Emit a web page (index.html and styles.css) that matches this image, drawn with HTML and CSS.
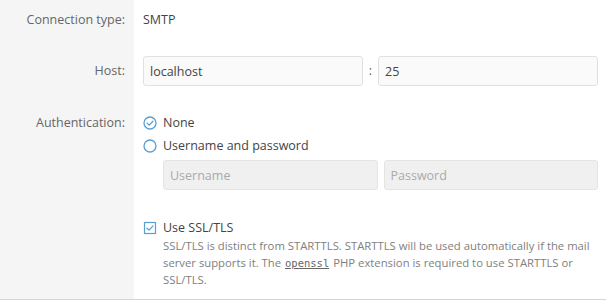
FILE: index.html
```html
<!DOCTYPE html>
<html lang="en">
  <head>
    <meta charset="UTF-8" />
    <title>Mail settings</title>
    <link rel="stylesheet" href="styles.css">
  </head>
  <body>
    <form class="settings">
      <!-- Connection type -->
      <div class="row row-type">
        <div class="label">Connection type:</div>
        <div class="value">SMTP</div>
      </div>

      <!-- Host and port -->
      <div class="row row-host">
        <div class="label">Host:</div>
        <div class="value host-fields">
          <input class="field" type="text" value="localhost" />
          <span class="colon">:</span>
          <input class="field" type="text" value="25" />
        </div>
      </div>

      <!-- Authentication -->
      <div class="row row-auth">
        <div class="label">Authentication:</div>
        <div class="value">
          <label class="option">
            <svg class="icon" viewBox="0 0 14 14" width="14" height="14">
              <circle cx="7" cy="7" r="6" fill="none" stroke="#5a9fd4" stroke-width="1.3" />
              <path d="M4.2 7.2 L6.2 9.1 L9.9 5.2" fill="none" stroke="#5a9fd4" stroke-width="1.3" stroke-linecap="round" stroke-linejoin="round" />
            </svg>
            None
          </label>
          <label class="option">
            <svg class="icon" viewBox="0 0 14 14" width="14" height="14">
              <circle cx="7" cy="7" r="6" fill="none" stroke="#5a9fd4" stroke-width="1.3" />
            </svg>
            Username and password
          </label>
          <div class="credentials">
            <input class="field" type="text" placeholder="Username" disabled />
            <input class="field" type="password" placeholder="Password" disabled />
          </div>

          <label class="option ssl">
            <svg class="icon" viewBox="0 0 14 14" width="14" height="14">
              <rect x="1.5" y="1.5" width="11" height="11" fill="none" stroke="#5a9fd4" stroke-width="1.2" />
              <path d="M4 7.2 L6 9.1 L10 4.9" fill="none" stroke="#5a9fd4" stroke-width="1.3" stroke-linecap="round" stroke-linejoin="round" />
            </svg>
            Use SSL/TLS
          </label>
          <p class="help">
            SSL/TLS is distinct from STARTTLS. STARTTLS will be used automatically if the mail
            server supports it. The <code>openssl</code> PHP extension is required to use STARTTLS or
            SSL/TLS.
          </p>
        </div>
      </div>
    </form>
  </body>
</html>
```

FILE: styles.css
```css
/* General Styles */
body {
  margin: 0;
  padding: 0;
  font-family: "Open Sans", sans-serif;
  font-size: 12.5px;
  color: #444;
  background-color: #fff;
}

.settings {
  border-bottom: 1px solid #d4d4d4;
}

.row {
  display: grid;
  grid-template-columns: 134px 1fr;
}

.label {
  background-color: #f5f5f5;
  color: #666;
  text-align: right;
  padding-right: 9px;
  line-height: 18px;
}

.value {
  padding: 0 8px 0 9px;
  line-height: 18px;
}

/* Rows */
.row-type .label,
.row-type .value {
  padding-top: 11px;
  padding-bottom: 11px;
}

.row-host .label {
  padding-top: 22px;
  padding-bottom: 20px;
}

.row-host .value {
  padding-top: 16px;
  padding-bottom: 14px;
}

.row-auth .label {
  padding-top: 14px;
}

.row-auth .value {
  padding-top: 14px;
  padding-bottom: 11px;
}

/* Inputs */
.field {
  box-sizing: border-box;
  height: 30px;
  min-width: 0;
  flex: 1;
  border: 1px solid #e0e0e0;
  border-radius: 3px;
  background-color: #fafafa;
  padding: 0 6px;
  font-family: "Open Sans", sans-serif;
  font-size: 12.5px;
  color: #444;
}

.field:disabled {
  background-color: #f0f0f0;
  border-color: #e4e4e4;
}

.field::placeholder {
  color: #aaa;
}

.host-fields {
  display: flex;
  align-items: center;
}

.colon {
  width: 15px;
  text-align: center;
  color: #666;
}

/* Options */
.option {
  display: flex;
  align-items: center;
  gap: 6px;
  line-height: 18px;
}

.option + .option {
  margin-top: 5px;
}

.icon {
  flex: none;
}

.credentials {
  display: flex;
  gap: 6px;
  margin: 5px 0 0 20px;
}

.ssl {
  margin-top: 29px;
}

.help {
  margin: 0 0 0 20px;
  font-size: 11.3px;
  line-height: 17px;
  color: #808080;
}

.help code {
  font-family: "DejaVu Sans Mono", monospace;
  font-size: 10.5px;
  line-height: 1;
  padding: 0 1px;
  text-decoration: underline;
  color: #666;
}
```
